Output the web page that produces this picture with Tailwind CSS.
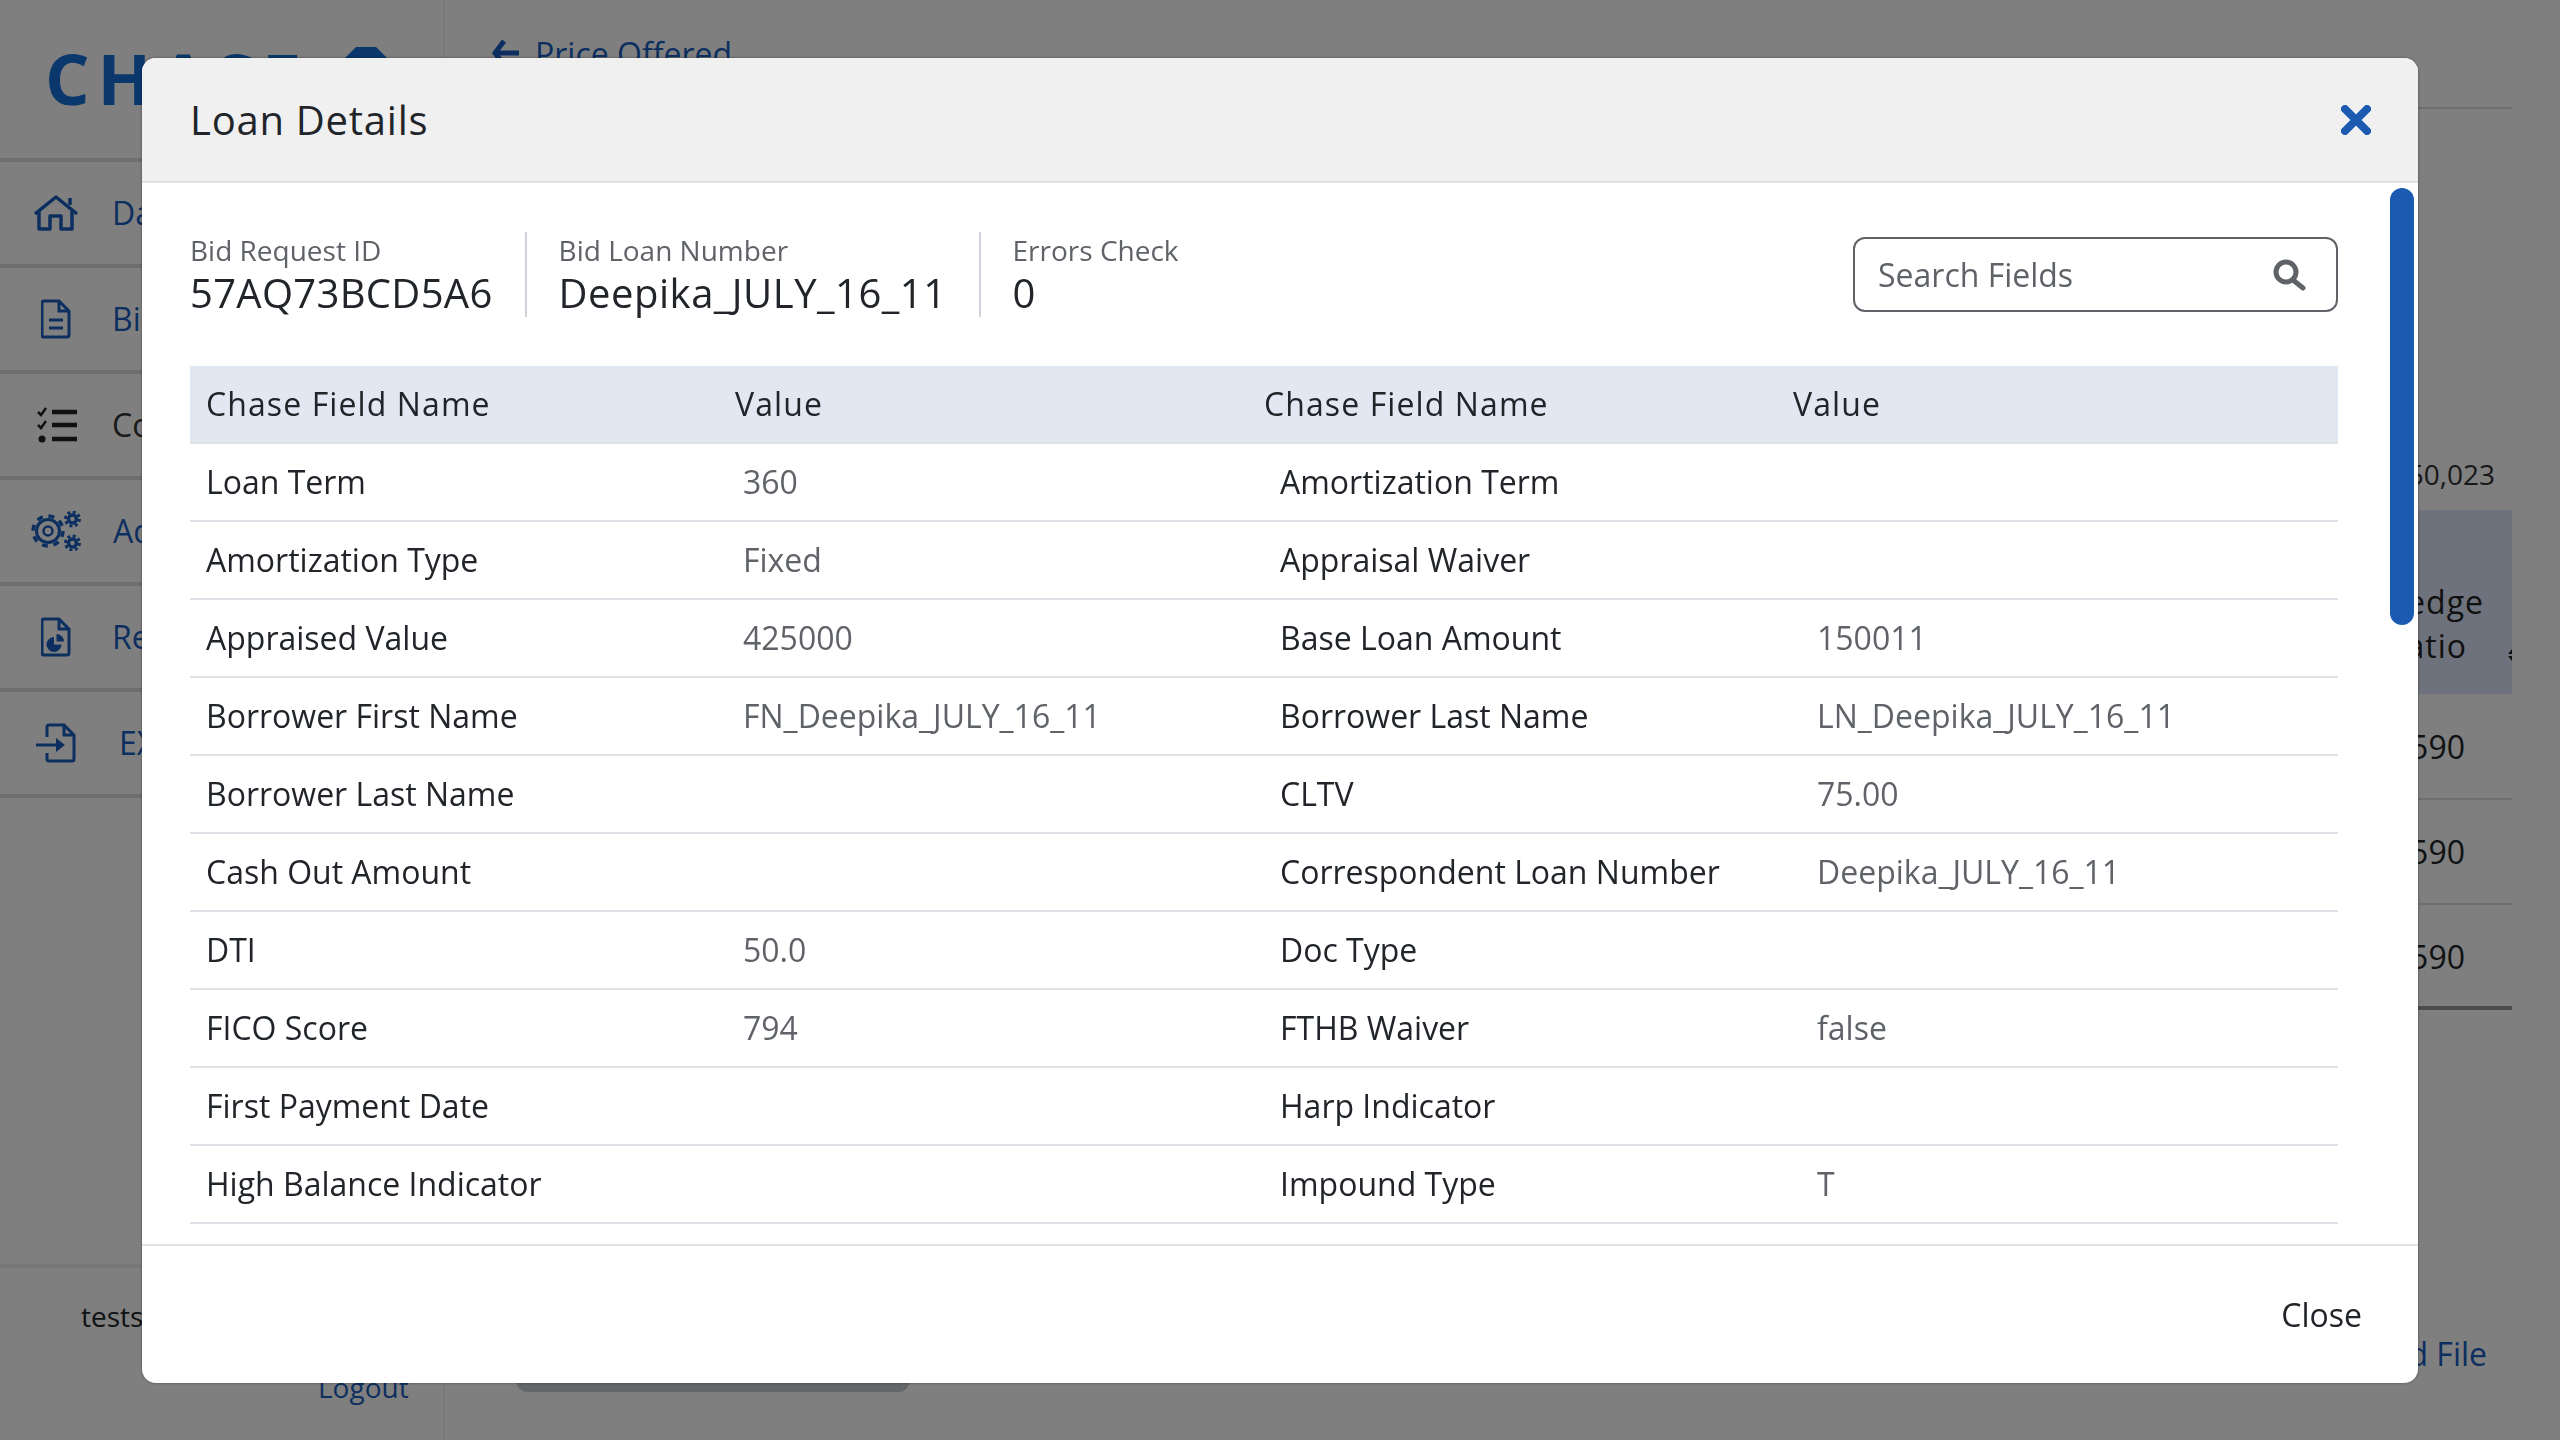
<!DOCTYPE html>
<html lang="en">
<head>
  <meta charset="UTF-8">
  <title>Loan Details</title>
  <script src="https://cdn.jsdelivr.net/npm/@tailwindcss/browser@4"></script>
</head>
<body class="bg-white font-['Open_Sans',sans-serif] text-[#212529] overflow-hidden">
  <!-- page behind the dialog -->
  <div class="flex h-screen w-full">
    <aside class="w-[445px] shrink-0 flex flex-col border-r-2 border-[#f4f4f4]">
      <div class="h-[162px] border-b-4 border-[#dcdcdc] flex items-center pl-[45px] pb-[2px]">
        <span class="text-[70px] leading-none font-bold tracking-[8px] text-[#1470d8]">CHASE</span>
        <svg class="w-[44px] h-[44px] ml-[35px] mb-[18px]" viewBox="0 0 44 44"><path d="M12 0h20l12 12v20L32 44H12L0 32V12z" fill="#1470d8"/></svg>
      </div>
      <nav class="flex flex-col text-[32px] text-[#1a5fc0]">
        <div class="h-[106px] border-b-4 border-[#dcdcdc] flex items-center pl-[34px]">
          <svg class="w-[44px] h-[36px]" viewBox="0 0 44 36" fill="none" stroke="#1a5fc0" stroke-width="3.500" stroke-linejoin="round"><path d="M1 19 22 2l21 17M5 16v18h11V21h11v13h11V16M36 10V3"/></svg>
          <span class="ml-[34px]">Da</span>
        </div>
        <div class="h-[106px] border-b-4 border-[#dcdcdc] flex items-center pl-[41px]">
          <svg class="w-[30px] h-[40px]" viewBox="0 0 30 40" fill="none" stroke="#1a5fc0" stroke-width="3"><path d="M3 2h15l10 10v24a2 2 0 0 1-2 2H3a2 2 0 0 1-2-2V4a2 2 0 0 1 2-2zM18 2v10h10M8 21h14M8 29h14"/></svg>
          <span class="ml-[41px]">Bi</span>
        </div>
        <div class="h-[106px] border-b-4 border-[#dcdcdc] flex items-center pl-[37px]">
          <svg class="w-[40px] h-[36px]" viewBox="0 0 40 36" fill="none"><path d="M1 5l3 3 5-7M1 18l3 3 5-7" stroke="#222" stroke-width="2.500"/><circle cx="5" cy="32" r="3.500" fill="#222"/><path d="M15 5h25M15 18h25M15 32h25" stroke="#222" stroke-width="4.500"/></svg>
          <span class="ml-[35px] text-[#333]">Co</span>
        </div>
        <div class="h-[106px] border-b-4 border-[#dcdcdc] flex items-center pl-[31px]">
          <svg class="w-[50px] h-[40px]" viewBox="0 0 50 40" fill="none" stroke="#1a5fc0">
            <circle cx="17" cy="20" r="11.500" stroke-width="3"/>
            <circle cx="17" cy="20" r="15" stroke-width="3.500" stroke-dasharray="6 5.780"/>
            <circle cx="17" cy="20" r="4.500" stroke-width="2.500"/>
            <circle cx="41.500" cy="8" r="4" stroke-width="3.500"/>
            <circle cx="41.500" cy="8" r="7" stroke-width="3" stroke-dasharray="3 2.500"/>
            <circle cx="41.500" cy="32" r="4" stroke-width="3.500"/>
            <circle cx="41.500" cy="32" r="7" stroke-width="3" stroke-dasharray="3 2.500"/>
          </svg>
          <span class="ml-[32px]">Ad</span>
        </div>
        <div class="h-[106px] border-b-4 border-[#dcdcdc] flex items-center pl-[41px]">
          <svg class="w-[30px] h-[40px]" viewBox="0 0 30 40" fill="none" stroke="#1a5fc0" stroke-width="3"><path d="M3 2h15l10 10v24a2 2 0 0 1-2 2H3a2 2 0 0 1-2-2V4a2 2 0 0 1 2-2zM18 2v10h10"/><path d="M13 20a7.500 7.500 0 1 0 7.500 7.500H13z" fill="#1a5fc0" stroke="none"/><path d="M15.500 17v7.500H23a7.500 7.500 0 0 0-7.500-7.500z" fill="#1a5fc0" stroke="none"/></svg>
          <span class="ml-[41px]">Re</span>
        </div>
        <div class="h-[106px] border-b-4 border-[#dcdcdc] flex items-center pl-[36px]">
          <svg class="w-[40px] h-[40px]" viewBox="0 0 40 40" fill="none" stroke="#1a5fc0" stroke-width="3"><path d="M11 14V4a2 2 0 0 1 2-2h15l10 10v24a2 2 0 0 1-2 2H13a2 2 0 0 1-2-2v-6M28 2v10h10M0 22h22"/><path d="M20 15l9 7-9 7z" fill="#1a5fc0" stroke="none"/></svg>
          <span class="ml-[43px]">EX</span>
        </div>
      </nav>
      <div class="mt-auto h-[176px] border-t-4 border-[#f0f0f0] flex flex-col pl-[81px] pt-[27px] text-[28px]">
        <span>tests</span>
        <a class="self-start ml-[237px] mt-[29px] text-[#1a5fc0] text-[28px]">Logout</a>
      </div>
    </aside>
    <main class="flex-1 flex flex-col min-w-0">
      <div class="mx-[46px] mr-[48px] h-[109px] border-b-2 border-[#dcdcdc] flex items-start pt-[30px] text-[32px] text-[#1a5fc0]">
        <svg class="w-[28px] h-[28px] mt-[9px] mr-[16px]" viewBox="0 0 28 28" fill="none" stroke="#1a5fc0" stroke-width="5"><path d="M13 2 4 14l9 12M5 14h23"/></svg>
        <span>Price Offered</span>
      </div>
      <div class="flex-1 mr-[48px] ml-[46px] relative flex flex-col">
        <div class="mt-[345px] text-right pr-[17px] text-[28px] text-[#333] leading-[40px]">50,023</div>
        <div class="relative mt-[16px] h-[184px] bg-[#dde5f8] flex flex-col items-end justify-center pr-[28px] pt-[44px] text-[32px] leading-[44px] tracking-[1px] text-[#222]">
          <span>Pledge</span>
          <span class="pr-[17px]">Ratio</span>
          <svg class="absolute right-0 top-[138px] w-[4px] h-[14px]" viewBox="0 0 4 14"><path d="M4 1v5H0zM4 8v5L0 8z" fill="#222"/></svg>
        </div>
        <div class="h-[106px] border-b-2 border-[#dcdcdc] flex items-center justify-end pr-[47px] pt-[2px] text-[32px]">590</div>
        <div class="h-[105px] border-b-2 border-[#dcdcdc] flex items-center justify-end pr-[47px] text-[32px]">590</div>
        <div class="h-[105px] border-b-4 border-[#999] flex items-center justify-end pr-[47px] pt-[2px] text-[32px]">590</div>
      </div>
      <div class="h-[172px] relative flex items-center justify-end pr-[73px] pt-[4px] text-[32px] text-[#1a5fc0]">
        <div class="absolute left-[71px] top-[80px] w-[394px] h-[44px] bg-[#c6ccd2] rounded-b-[12px]"></div>
        <span class="mt-[-5px]">d File</span>
      </div>
    </main>
  </div>

  <!-- overlay + dialog -->
  <div class="fixed inset-0 bg-black/50">
    <div class="absolute left-[142px] top-[58px] w-[2276px] h-[1325px] bg-white rounded-[14px] flex flex-col overflow-hidden shadow-[0_0_3px_rgba(0,0,0,0.4)]">
      <header class="h-[125px] shrink-0 bg-[#f0f0f0] border-b-2 border-[#dee2e6] flex items-center justify-between pl-[48px] pr-[47px]">
        <h2 class="text-[40px] tracking-[0.75px]">Loan Details</h2>
        <svg class="w-[30px] h-[30px]" viewBox="0 0 30 30" fill="none" stroke="#1a5ab0" stroke-width="8" stroke-linecap="round"><path d="M4 4l22 22M26 4 4 26"/></svg>
      </header>

      <div class="flex-1 relative overflow-hidden pl-[48px] pr-[80px]">
        <div class="absolute right-[4px] top-[5px] w-[24px] h-[437px] rounded-full bg-[#1a5ab0]"></div>

        <div class="flex items-start justify-between pt-[49px] h-[183px]">
          <div class="flex">
            <div class="pr-[32px] border-r-2 border-[#ced4da] h-[85px]">
              <p class="text-[28px] leading-[36px] text-[#5f6368]">Bid Request ID</p>
              <p class="text-[40px] leading-[49px] tracking-[0.3px]">57AQ73BCD5A6</p>
            </div>
            <div class="pl-[32px] pr-[32px] border-r-2 border-[#ced4da] h-[85px]">
              <p class="text-[28px] leading-[36px] text-[#5f6368]">Bid Loan Number</p>
              <p class="text-[40px] leading-[49px] tracking-[0.5px]">Deepika_JULY_16_11</p>
            </div>
            <div class="pl-[32px] h-[85px]">
              <p class="text-[28px] leading-[36px] text-[#5f6368]">Errors Check</p>
              <p class="text-[40px] leading-[49px]">0</p>
            </div>
          </div>
          <div class="w-[485px] h-[75px] border-2 border-[#5f6368] rounded-[12px] flex items-center justify-between pl-[23px] pr-[30px] mt-[5px]">
            <span class="text-[32px] text-[#5f6368]">Search Fields</span>
            <svg class="w-[34px] h-[32px]" viewBox="0 0 34 32" fill="none" stroke="#5f6368"><circle cx="14" cy="13" r="10" stroke-width="5"/><path d="M21 21l10 8" stroke-width="5" stroke-linecap="round"/></svg>
          </div>
        </div>

        <div class="w-[2148px]">
          <div class="h-[78px] bg-[#e1e8f2] border-b-2 border-[#dee2e6] grid grid-cols-4 items-center px-[16px] text-[32px] tracking-[1.1px]">
            <span>Chase Field Name</span><span>Value</span><span>Chase Field Name</span><span>Value</span>
          </div>
          <div id="rows"></div>
        </div>
      </div>

      <footer class="h-[139px] shrink-0 border-t-2 border-[#dee2e6] flex items-center justify-end pr-[56px] text-[32px]">
        <span>Close</span>
      </footer>
    </div>
  </div>

  <script>
    const rows = [
      ["Loan Term", "360", "Amortization Term", ""],
      ["Amortization Type", "Fixed", "Appraisal Waiver", ""],
      ["Appraised Value", "425000", "Base Loan Amount", "150011"],
      ["Borrower First Name", "FN_Deepika_JULY_16_11", "Borrower Last Name", "LN_Deepika_JULY_16_11"],
      ["Borrower Last Name", "", "CLTV", "75.00"],
      ["Cash Out Amount", "", "Correspondent Loan Number", "Deepika_JULY_16_11"],
      ["DTI", "50.0", "Doc Type", ""],
      ["FICO Score", "794", "FTHB Waiver", "false"],
      ["First Payment Date", "", "Harp Indicator", ""],
      ["High Balance Indicator", "", "Impound Type", "T"]
    ];
    const list = document.getElementById("rows");
    rows.forEach(r => {
      const row = document.createElement("div");
      row.className = "h-[78px] border-b-2 border-[#dee2e6] grid grid-cols-4 items-center text-[32px]";
      row.innerHTML = `
        <span class="px-[16px]">${r[0]}</span>
        <span class="px-[16px] text-[#5f6368]">${r[1]}</span>
        <span class="px-[16px]">${r[2]}</span>
        <span class="px-[16px] text-[#5f6368]">${r[3]}</span>
      `;
      list.appendChild(row);
    });
  </script>
</body>
</html>
